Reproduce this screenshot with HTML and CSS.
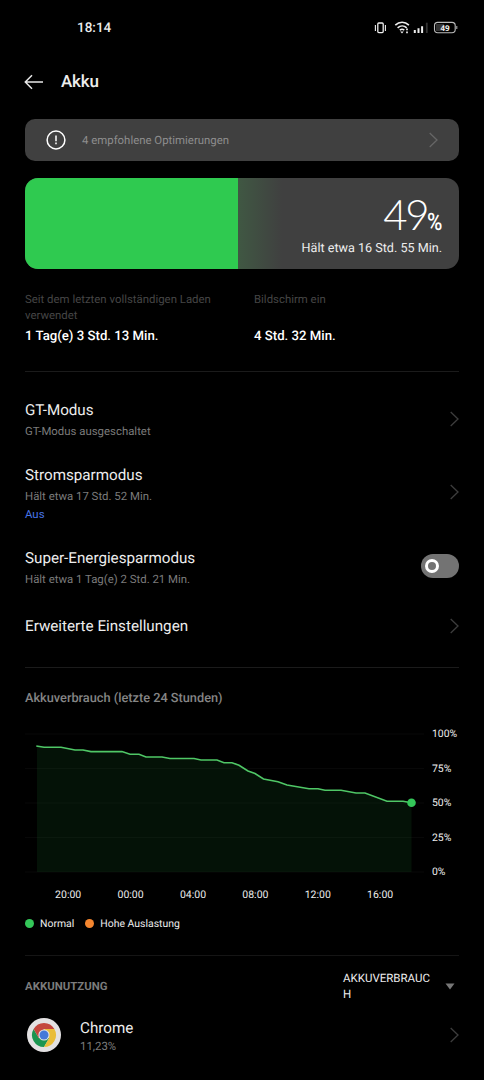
FILE: index.html
```html
<!DOCTYPE html>
<html lang="de">
<head>
<meta charset="utf-8">
<title>Akku</title>
<link rel="stylesheet" href="styles.css">
</head>
<body>
<svg width="0" height="0" class="defs"><symbol id="chevron" viewBox="0 0 10 16"><path d="M1.700 1l7.300 7-7.300 7" fill="none" stroke="currentColor" stroke-width="1.300"/></symbol></svg>
<div class="status">
  <time>18:14</time>
  <svg width="84" height="16" viewBox="374 20 84 16" fill="none" stroke="#eee">
    <rect x="377.800" y="23" width="5.400" height="9.600" rx="1" stroke-width="1.300"/>
    <path d="M375.400 25v6M385.400 25v6" stroke-width="1.100"/>
    <path d="M395.300 25.100c4-3.800 9.600-3.800 13.600 0M397.600 27.800c2.700-2.500 6.500-2.500 9.100 0M399.800 30.200c1.500-1.200 3-1.200 4.500 0" stroke-width="1.600"/>
    <path d="M400.200 31.600h3.500l-1.700 1.800z" fill="#eee" stroke="none"/>
    <path d="M407 28.500v1.800M407 31.500v1.800" stroke-width="1.700"/>
    <path d="M414.800 30v3M418.500 28.300V33M422.100 26.200V33" stroke-width="2"/>
    <path d="M426.800 22.700V33" stroke="#333" stroke-width="1.800"/>
    <rect x="434.500" y="22.400" width="20.700" height="10.300" rx="3.200" stroke="#bbb" stroke-width="1.100"/>
    <path d="M436 24h8v7h-8z" fill="#333" stroke="none"/>
    <path d="M456.800 26v3" stroke="#bbb"/>
    <text x="445" y="30.600" class="battery-level">49</text>
  </svg>
</div>
<header class="bar">
  <svg width="20" height="16" viewBox="0 0 20 16" fill="none" stroke="#e8e8e8" stroke-width="1.500"><path d="M19 8H1.500M8 1.300L1.300 8 8 14.700"/></svg>
  <h1>Akku</h1>
</header>
<main>
  <section class="tip">
    <svg width="20" height="20" viewBox="0 0 20 20" fill="none" stroke="#fff" stroke-width="1.500"><circle cx="10" cy="10" r="8.900"/><path d="M10 5.600v5.600M10 12.600v1.700"/></svg>
    <span>4 empfohlene Optimierungen</span>
    <svg class="chev"><use href="#chevron"/></svg>
  </section>
  <section class="battery">
    <div class="charge"></div>
    <div class="glow"></div>
    <div class="level">
      <div class="pct"><span class="num">49</span><span class="sign">%</span></div>
      <div class="remain">Hält etwa 16 Std. 55 Min.</div>
    </div>
  </section>
  <section class="stats">
    <div class="label">Seit dem letzten vollständigen Laden verwendet</div>
    <div class="label">Bildschirm ein</div>
    <strong>1 Tag(e) 3 Std. 13 Min.</strong>
    <strong>4 Std. 32 Min.</strong>
  </section>
  <section class="modes">
    <div class="row gt"><div><h2>GT-Modus</h2><p>GT-Modus ausgeschaltet</p></div><svg class="chev"><use href="#chevron"/></svg></div>
    <div class="row saver"><div><h2>Stromsparmodus</h2><p>Hält etwa 17 Std. 52 Min.</p><p class="state">Aus</p></div><svg class="chev"><use href="#chevron"/></svg></div>
    <div class="row super"><div><h2>Super-Energiesparmodus</h2><p>Hält etwa 1 Tag(e) 2 Std. 21 Min.</p></div><span class="toggle"><i></i></span></div>
    <div class="row more"><h2>Erweiterte Einstellungen</h2><svg class="chev"><use href="#chevron"/></svg></div>
  </section>
  <section class="usage">
    <h3>Akkuverbrauch (letzte 24 Stunden)</h3>
    <div class="chart">
      <svg width="407" height="172" viewBox="25 717 407 172">
        <path d="M25 734H424M25 768.500H424M25 803H424M25 837.500H424M25 872H424" stroke="#080808"/>
        <path d="M37 746L44 747.300H61L75 750H83L91 751.600H122L130 754.300H139L146 757H162L170 758.500H194L201 760H217L224 762.700H232L239 765.300L248 771L255 773.500L263.500 779L278 781.700L287 785L309 788.700H318L325 790.300H341L356 793H365L387 801.300H403L411.500 802.800V872H37z" fill="#2fca50" fill-opacity=".09"/>
        <path d="M36.300 746L44 747.300H61L75 750H83L91 751.600H122L130 754.300H139L146 757H162L170 758.500H194L201 760H217L224 762.700H232L239 765.300L248 771L255 773.500L263.500 779L278 781.700L287 785L309 788.700H318L325 790.300H341L356 793H365L387 801.300H403L411.500 802.800" fill="none" stroke="#4fc766" stroke-width="1.600"/>
        <circle cx="411.500" cy="802.800" r="4.300" fill="#34c759"/>
      </svg>
      <div class="ylabels"><span>100%</span><span>75%</span><span>50%</span><span>25%</span><span>0%</span></div>
    </div>
    <div class="xlabels"><span>20:00</span><span>00:00</span><span>04:00</span><span>08:00</span><span>12:00</span><span>16:00</span></div>
    <div class="legend"><i class="normal"></i><span>Normal</span><i class="high"></i><span>Hohe Auslastung</span></div>
  </section>
  <section class="apps">
    <div class="apps-head"><h4>AKKUNUTZUNG</h4><span class="sort">AKKUVERBRAUCH</span><svg width="10" height="7" viewBox="0 0 10 7"><path d="M.5.500h9L5 6.500z" fill="#777"/></svg></div>
    <div class="app">
      <svg width="34" height="34" viewBox="-17 -17 34 34">
        <circle r="17" fill="#e3e1e2"/>
        <path d="M-5.200 3L-10.400-6A12 12 0 0 0 0 12L5.200 3z" fill="#1b9550"/>
        <path d="M0-6H10.400A12 12 0 0 1 0 12L5.200 3z" fill="#e9bd38"/>
        <path d="M-10.400-6A12 12 0 0 1 10.400-6H0L-5.200 3z" fill="#c4473d"/>
        <circle r="5.600" fill="#e3e1e2"/><circle r="4.500" fill="#4579d8"/>
      </svg>
      <div class="name"><h2>Chrome</h2><p>11,23%</p></div>
      <svg class="chev"><use href="#chevron"/></svg>
    </div>
  </section>
</main>
</body>
</html>
```
FILE: styles.css
```css
* { box-sizing: border-box; margin: 0; padding: 0; }
body { width: 484px; height: 1080px; overflow: hidden; background: #000; color: #ededed; font-family: Roboto, sans-serif; font-size: 11.4px; text-rendering: geometricPrecision; }
svg { display: block; flex: none; }
.defs { position: absolute; }
h1, h2, h3, h4 { font-weight: 400; }
.status { display: flex; justify-content: space-between; align-items: center; height: 56px; padding: 0 26px 0 77px; }
.status time { font-size: 13.5px; font-weight: 500; }
.battery-level { font: 700 8px "Open Sans", sans-serif; text-anchor: middle; fill: #eee; stroke: none; }
.bar { display: flex; align-items: center; gap: 17px; height: 51px; padding-left: 24px; }
.bar h1 { font-size: 17px; font-weight: 500; line-height: 24px; letter-spacing: -.2px; }
main { padding: 12px 25px 0; }
.chev { width: 10px; height: 16px; color: #3d3d3d; }
.tip { display: flex; align-items: center; height: 42px; padding: 0 21px; border-radius: 10px; background: #404040; color: #8d8d8d; }
.tip span { flex: 1; margin-left: 16px; font-size: 11.4px; }
.tip .chev { color: #666; }
.battery { display: flex; height: 91px; margin-top: 17px; border-radius: 13px; overflow: hidden; background: #404040; }
.charge { width: 213px; background: #2fca50; }
.glow { width: 44px; background: linear-gradient(90deg, #405843, #404040); }
.level { flex: 1; padding: 16px 17px 0 0; text-align: right; }
.pct { display: flex; justify-content: flex-end; align-items: baseline; height: 45px; line-height: 40px; color: #fff; }
.num { font-family: Lato, sans-serif; font-size: 42px; font-weight: 300; letter-spacing: -2.5px; }
.sign { width: 15px; font-size: 24px; font-weight: 500; transform: scaleX(.87); transform-origin: left; }
.remain { font-size: 12.6px; line-height: 20px; white-space: nowrap; }
.stats { display: grid; grid-template-columns: 229px 1fr; grid-template-rows: 36px 20px; height: 103px; padding-top: 22px; border-bottom: 1px solid #1b1b1b; }
.label { width: 210px; line-height: 16px; color: #454545; }
.stats strong { font-size: 13.2px; font-weight: 500; line-height: 20px; color: #fff; }
.modes { height: 296px; padding-top: 29px; border-bottom: 1px solid #1b1b1b; }
.row { display: flex; justify-content: space-between; align-items: center; }
h2 { font-size: 15.2px; line-height: 20px; }
p { font-size: 11.4px; line-height: 18px; color: #7b7b7b; }
.row p { padding-top: 2px; }
.gt { height: 38px; }
.gt .chev { margin-top: -3px; }
.saver { height: 58px; margin-top: 26px; }
.saver .chev { margin-top: -4px; }
.saver .state { padding: 0; color: #4775e6; }
.super { height: 40px; margin-top: 25px; }
.toggle { width: 38px; height: 24px; margin-top: -4px; padding: 5px 4px; border-radius: 12px; background: #737373; }
.toggle i { display: block; width: 14px; height: 14px; border: 3px solid #fff; border-radius: 50%; }
.more { height: 20px; margin-top: 28px; }
.usage { height: 288px; padding-top: 21px; border-bottom: 1px solid #151515; }
h3 { height: 28px; font-size: 12.75px; line-height: 20px; font-weight: 500; color: #858585; }
.chart { display: flex; height: 169px; }
.ylabels { font-size: 10.4px; line-height: 34.6px; }
.ylabels span { display: block; }
.xlabels { display: grid; grid-template-columns: repeat(6, 62.4px); padding: 1px 0 0 12px; font-size: 10.5px; line-height: 16px; text-align: center; }
.legend { display: flex; align-items: center; height: 16px; margin-top: 12px; font-size: 10.45px; }
.legend i { width: 9px; height: 9px; margin-right: 6px; border-radius: 50%; }
.legend span { margin-right: 11px; }
.normal { background: #34c759; }
.high { background: #f5862f; }
.apps-head { display: flex; align-items: center; height: 60px; }
h4 { width: 318px; font-size: 11.4px; font-weight: 700; color: #7b7b7b; }
.sort { width: 88px; font-size: 11.5px; line-height: 16px; word-break: break-all; }
.apps-head svg { margin-left: 14px; }
.app { display: flex; align-items: center; height: 38px; padding-left: 2px; }
.name { flex: 1; margin: 3px 0 0 19px; }
.name h2 { line-height: 18px; }
```
